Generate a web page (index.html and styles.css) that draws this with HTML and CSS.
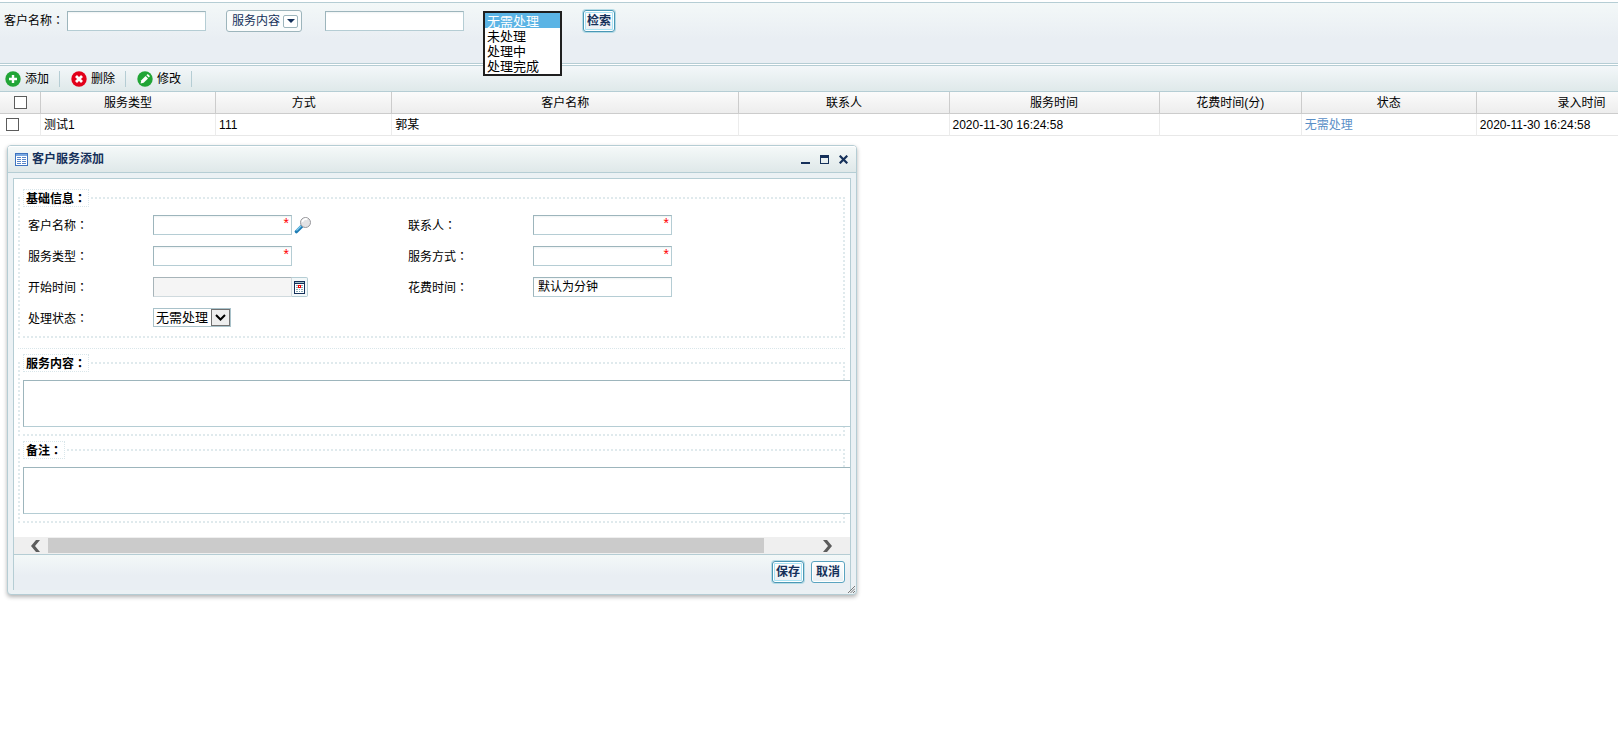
FILE: index.html
```html
<!DOCTYPE html>
<html lang="zh-CN">
<head>
<meta charset="utf-8">
<title>客户服务</title>
<link rel="stylesheet" href="styles.css">
</head>
<body>
<form class="search-bar">
  <div class="search-field">
    <label for="q-name">客户名称<span class="colon" lang="zh-TW">：</span></label>
    <input class="text-box" id="q-name" type="text">
  </div>
  <button class="menu-button" type="button">服务内容
    <span class="menu-arrow"><svg width="8" height="4" viewBox="0 0 8 4"><path d="M0 0h8L4 4z" fill="#15305a"/></svg></span>
  </button>
  <input class="text-box" type="text" aria-label="服务内容">
  <div class="list-anchor">
    <select class="status-list" size="4" aria-label="状态">
      <option selected>无需处理</option>
      <option>未处理</option>
      <option>处理中</option>
      <option>处理完成</option>
    </select>
  </div>
  <button class="button button-primary" type="button">检索</button>
</form>

<div class="toolbar">
  <button class="tool" type="button">
    <svg width="16" height="16" viewBox="0 0 16 16"><circle cx="8" cy="8" r="7.7" fill="#21a536"/><path d="M8 4v8M4 8h8" stroke="#fff" stroke-width="2.4"/></svg>添加</button>
  <button class="tool" type="button">
    <svg width="16" height="16" viewBox="0 0 16 16"><circle cx="8" cy="8" r="7.7" fill="#e2001a"/><path d="M5 5l6 6M11 5l-6 6" stroke="#fff" stroke-width="2.8"/></svg>删除</button>
  <button class="tool" type="button">
    <svg width="16" height="16" viewBox="0 0 16 16"><circle cx="8" cy="8" r="7.7" fill="#21a536"/><path d="M3.6 12.4l.7-3.1 4.3-4.3 2.4 2.4-4.3 4.3z" fill="#fff"/><path d="M9.4 4.2l.9-.9q.5-.3 1 .1l1.3 1.3q.4.5 0 1l-.8.9z" fill="#fff"/></svg>修改</button>
</div>

<div class="grid-view">
  <table class="records">
    <colgroup>
      <col class="c-check"><col class="c-mid"><col class="c-way"><col class="c-name"><col class="c-wide"><col class="c-wide"><col class="c-cost"><col class="c-mid"><col class="c-wide">
    </colgroup>
    <thead>
      <tr>
        <th><input class="tick" type="checkbox" aria-label="全选"></th>
        <th>服务类型</th><th>方式</th><th>客户名称</th><th>联系人</th><th>服务时间</th><th>花费时间(分)</th><th>状态</th><th>录入时间</th>
      </tr>
    </thead>
    <tbody>
      <tr>
        <td><input class="tick" type="checkbox" aria-label="选择测试1"></td>
        <td>测试1</td><td>111</td><td>郭某</td><td></td><td>2020-11-30 16:24:58</td><td></td><td><a href="#">无需处理</a></td><td>2020-11-30 16:24:58</td>
      </tr>
    </tbody>
  </table>
</div>

<section class="window" role="dialog" aria-labelledby="win-title">
  <header class="window-head">
    <svg width="13" height="13" viewBox="0 0 13 13" shape-rendering="crispEdges"><rect x=".5" y=".5" width="12" height="12" fill="#fff" stroke="#3f74c0"/><path d="M1 1h11v2H1z" fill="#7ba8e0"/><path d="M2 4.5h4M7 4.5h4M2 6.5h4M7 6.5h4M2 8.5h4M7 8.5h4M2 10.5h4M7 10.5h4" stroke="#5a86c8"/></svg>
    <h1 id="win-title">客户服务添加</h1>
    <button type="button" aria-label="最小化"><svg width="9" height="9" viewBox="0 0 9 9"><path d="M0 7h9v2H0z" fill="#15305a"/></svg></button>
    <button type="button" aria-label="最大化"><svg width="9" height="9" viewBox="0 0 9 9"><path d="M0 0h9v9H0zM1 3v5h7V3z" fill="#15305a" fill-rule="evenodd"/></svg></button>
    <button type="button" aria-label="关闭"><svg width="9" height="9" viewBox="0 0 9 9"><path d="M.7.7l7.6 7.6M8.3.7L.7 8.3" stroke="#15305a" stroke-width="2.2"/></svg></button>
  </header>
  <form class="window-body">
    <div class="pane">
      <fieldset>
        <legend>基础信息<span class="colon" lang="zh-TW">：</span></legend>
        <div class="form-grid">
          <label for="f-name">客户名称<span class="colon" lang="zh-TW">：</span></label>
          <div class="field">
            <span class="required"><input class="text-box" id="f-name" type="text" required></span>
            <button class="lookup" type="button" aria-label="查找客户"><svg width="18" height="18" viewBox="0 0 18 18"><path d="M2.4 15.6L8 10" stroke="#1e7cb4" stroke-width="3.4" stroke-linecap="round"/><path d="M2.4 14.6l4.800-4.800" stroke="#7fcdf0" stroke-width="1.4"/><circle cx="11.500" cy="6.500" r="5" fill="#e2e2e4" stroke="#98989c"/><path d="M8.3 6a3.500 3.500 0 0 1 5-2.600" stroke="#fff" stroke-width="1.8" fill="none"/></svg></button>
          </div>
          <label for="f-contact">联系人<span class="colon" lang="zh-TW">：</span></label>
          <div class="field"><span class="required"><input class="text-box" id="f-contact" type="text" required></span></div>

          <label for="f-type">服务类型<span class="colon" lang="zh-TW">：</span></label>
          <div class="field"><span class="required"><input class="text-box" id="f-type" type="text" required></span></div>
          <label for="f-way">服务方式<span class="colon" lang="zh-TW">：</span></label>
          <div class="field"><span class="required"><input class="text-box" id="f-way" type="text" required></span></div>

          <label for="f-start">开始时间<span class="colon" lang="zh-TW">：</span></label>
          <div class="field">
            <input class="text-box" id="f-start" type="text" readonly>
            <button class="calendar" type="button" aria-label="选择日期"><svg width="11" height="13" viewBox="0 0 11 13" shape-rendering="crispEdges"><path d="M0 0h11v13H0z" fill="#15305a"/><path d="M1 1h9v1H1z" fill="#9dbfc6"/><path d="M1 3h9v9H1z" fill="#fff"/><path d="M2 4h2v1H2zM7 4h2v1H7zM2 6h2v1H2zM7 6h2v1H7zM2 8h2v1H2zM5 8h1v1H5zM7 8h2v1H7zM2 10h2v1H2zM5 10h1v1H5zM7 10h2v1H7z" fill="#86aab4"/><path d="M4 4h3v3H4z" fill="#f00"/><path d="M5 5h1v1H5z" fill="#fff"/></svg></button>
          </div>
          <label for="f-cost">花费时间<span class="colon" lang="zh-TW">：</span></label>
          <div class="field"><input class="text-box" id="f-cost" type="text" value="默认为分钟"></div>

          <label for="f-status">处理状态<span class="colon" lang="zh-TW">：</span></label>
          <div class="field">
            <span class="drop-down">
              <select id="f-status"><option>无需处理</option><option>未处理</option><option>处理中</option><option>处理完成</option></select>
              <span class="drop-arrow"><svg width="11" height="7" viewBox="0 0 11 7"><path d="M1 1l4.500 4.500L10 1" fill="none" stroke="#000" stroke-width="2"/></svg></span>
            </span>
          </div>
        </div>
      </fieldset>
      <hr>
      <fieldset>
        <legend>服务内容<span class="colon" lang="zh-TW">：</span></legend>
        <textarea aria-label="服务内容"></textarea>
      </fieldset>
      <fieldset>
        <legend>备注<span class="colon" lang="zh-TW">：</span></legend>
        <textarea aria-label="备注"></textarea>
      </fieldset>
    </div>
    <div class="scroll-track">
      <button type="button" aria-label="向左滚动"><svg width="10" height="12" viewBox="0 0 10 12"><path d="M6 0h4L5 6l5 6H6L1 6z" fill="#5c5c5c"/></svg></button>
      <div class="scroll-thumb"></div>
      <button type="button" aria-label="向右滚动"><svg width="10" height="12" viewBox="0 0 10 12"><path d="M4 0H0l5 6-5 6h4l5-6z" fill="#5c5c5c"/></svg></button>
    </div>
    <footer class="actions">
      <button class="button button-primary" type="button">保存</button>
      <button class="button" type="button">取消</button>
    </footer>
  </form>
  <svg class="resize-grip" width="7" height="7" viewBox="0 0 7 7"><path d="M0 7l7-7M2.500 7L7 2.500M5 7l2-2" stroke="#777" fill="none"/></svg>
</section>
</body>
</html>
```

FILE: styles.css
```css
* {
  box-sizing: border-box;
}

body {
  margin: 0;
  overflow-x: hidden;
  background: #fff;
  color: #000;
  font: 12px/20px "Liberation Sans", "Noto Sans CJK SC", sans-serif;
}

button,
input,
select,
textarea {
  margin: 0;
  font: inherit;
  color: inherit;
}

button {
  padding: 0;
  border: 0;
  background: none;
}

svg {
  display: block;
  flex: none;
}

.colon {
  font-family: "Noto Sans CJK TC", sans-serif;
  line-height: 12px;
}

.text-box {
  display: block;
  width: 139px;
  height: 20px;
  padding: 0 4px;
  border: 1px solid #b5cdd4;
  border-top-color: #9db5bc;
  border-left-color: #9db5bc;
  border-radius: 0;
  background: #fff linear-gradient(#eef2f3, #fff 2px);
  outline: 0;
}

.text-box:read-only {
  background: #f5f5f5;
  border-color: #a7b4b9 #d0dade #d0dade #a7b4b9;
}

/* Search bar */
.search-bar {
  display: flex;
  align-items: flex-start;
  height: 62px;
  margin-top: 2px;
  padding: 7px 4px;
  border-top: 1px solid #b5cdd4;
  border-bottom: 1px solid #b5cdd4;
  background: linear-gradient(#f3f8f8, #e9eef3 60%);
}

.search-field {
  display: flex;
  gap: 3px;
}

.search-field label {
  line-height: 22px;
}

.search-bar .text-box {
  margin-top: 1px;
}

.menu-button {
  display: flex;
  align-items: center;
  gap: 3px;
  height: 22px;
  margin: 0 23px 0 20px;
  padding: 0 3px 0 5px;
  border: 1px solid #9db5bc;
  border-radius: 3px;
  background: #fafcfc;
  color: #15305a;
  line-height: 18px;
}

.menu-arrow {
  display: grid;
  place-items: center;
  width: 15px;
  height: 13px;
  border: 1px solid #9db5bc;
  border-radius: 2px;
  background: #fff;
}

.list-anchor {
  position: relative;
  width: 79px;
  margin: 1px 21px 0 19px;
}

.status-list {
  position: absolute;
  top: 0;
  left: 0;
  z-index: 2;
  width: 79px;
  height: 65px;
  padding: 0;
  overflow: hidden;
  border: 2px solid #1f1f1f;
  border-radius: 0;
  background: #fff;
  font-size: 13px;
}

.status-list option {
  display: flex;
  align-items: center;
  height: 15px;
  min-height: 15px;
  padding: 0 2px;
}

.status-list option:checked {
  background: #5bb4e5 linear-gradient(#5bb4e5, #5bb4e5);
  color: #fff;
}

.button {
  height: 22px;
  padding: 0 4px;
  border: 1px solid #5aa3c0;
  border-radius: 3px;
  background: linear-gradient(#fff, #e9eff4);
  box-shadow: inset 0 0 0 1px #fff;
  color: #15305a;
  font-weight: bold;
}

.button-primary {
  padding: 0 3px;
  border-color: #4a97b5;
  box-shadow: 0 0 0 1px #b5dbe6, inset 0 0 0 1px #fff, inset 0 0 0 2px #a9e2f3;
}

/* Toolbar */
.toolbar {
  display: flex;
  align-items: center;
  height: 27px;
  margin-top: 1px;
  padding-left: 5px;
  border-top: 1px solid #b5cdd4;
  border-bottom: 1px solid #b5cdd4;
  background: linear-gradient(#f3f7f9, #dfe9ea);
}

.tool {
  display: flex;
  align-items: center;
  gap: 4px;
  height: 16px;
  margin-right: 11px;
  padding-right: 10px;
  border-right: 1px solid #b5cdd4;
}

/* Records */
.grid-view {
  overflow: hidden;
}

.records {
  width: 1687px;
  table-layout: fixed;
  border-collapse: separate;
  border-spacing: 0;
}

.c-check { width: 41px; }
.c-mid { width: 175px; }
.c-way { width: 176px; }
.c-name { width: 347px; }
.c-wide { width: 210px; }
.c-cost { width: 142px; }

.records th,
.records td {
  height: 22px;
  padding: 0 3px;
  border-right: 1px solid #ececec;
  border-bottom: 1px solid #e8e8e8;
  line-height: 18px;
  white-space: nowrap;
}

.records th {
  border-color: #ccc;
  background: linear-gradient(#fbfbfb, #ededed);
  font-weight: normal;
  text-align: center;
}

.records td:first-child {
  padding-left: 6px;
}

.tick {
  display: block;
  width: 13px;
  height: 13px;
  border: 1px solid #5c5c5c;
  background: #fff;
  appearance: none;
}

.tick:checked {
  background: #5bb4e5;
}

th .tick {
  margin: 0 auto;
}

.records a {
  color: #5a8fc7;
  text-decoration: none;
}

/* Window */
.window {
  position: absolute;
  top: 145px;
  left: 7px;
  width: 850px;
  padding: 0 5px 4px;
  border: 1px solid #b5cdd4;
  border-radius: 4px;
  background: #ebf1f4;
  box-shadow: 0 2px 4px rgba(0, 0, 0, 0.3);
}

.window-head {
  display: flex;
  align-items: center;
  gap: 10px;
  height: 27px;
  margin: 0 -5px 5px;
  padding: 0 8px 0 7px;
  border-bottom: 1px solid #b5cdd4;
  border-radius: 3px 3px 0 0;
  background: linear-gradient(#f5f9f9, #dfe8e9);
  box-shadow: inset 0 1px #fff;
}

.window-head h1 {
  flex: 1;
  margin: 0 0 0 -6px;
  color: #15305a;
  font-size: 12px;
  line-height: 22px;
}

.window-body {
  border: 1px solid #b5cdd4;
  border-bottom: 0;
  background: #fff;
}

.pane {
  display: flex;
  flex-direction: column;
  overflow: hidden;
  padding: 10px 5px 14px 4px;
}

fieldset {
  min-width: 0;
  margin: 0;
  padding: 8px 3px 7px;
  border: 2px dotted #e0eaed;
}

fieldset + fieldset {
  margin-top: 5px;
}

legend {
  height: 18px;
  padding: 0 2px;
  border: 1px dotted #d9e6ea;
  font-weight: bold;
  line-height: 18px;
}

hr {
  width: 100%;
  margin: 10px 0 5px;
  border: 0;
  border-top: 1px dotted #d9e6ea;
}

.form-grid {
  display: grid;
  grid-template-columns: 125px 255px 125px 1fr;
  grid-auto-rows: 20px;
  row-gap: 11px;
  padding: 0 0 1px 5px;
}

.form-grid label {
  line-height: 22px;
}

.field {
  display: flex;
}

.required {
  position: relative;
}

.required::after {
  content: "*";
  position: absolute;
  top: 1px;
  right: 3px;
  color: #f00;
  font-size: 14px;
  line-height: 14px;
}

.lookup {
  margin-left: 2px;
}

.calendar {
  display: grid;
  place-items: center;
  width: 16px;
  height: 20px;
  border: 1px solid #b5cdd4;
  border-left: 0;
  border-radius: 0 2px 2px 0;
  background: #f3f8f9;
}

.drop-down {
  position: relative;
  display: block;
  width: 78px;
  height: 19px;
}

.drop-down select {
  display: block;
  width: 100%;
  height: 100%;
  padding: 0 2px;
  border: 1px solid #a9c2ca;
  border-radius: 0;
  background: #fff;
  font-size: 13px;
  line-height: 17px;
  appearance: none;
}

.drop-arrow {
  position: absolute;
  top: 1px;
  right: 1px;
  display: grid;
  place-items: center;
  width: 19px;
  height: 17px;
  border: 1px solid #707070;
  background: #eee;
  pointer-events: none;
}

textarea {
  display: block;
  width: calc(100% + 60px);
  height: 47px;
  border: 1px solid #b5cdd4;
  border-top-color: #9db5bc;
  border-left-color: #9db5bc;
  border-radius: 0;
  outline: 0;
  resize: none;
}

.scroll-track {
  display: flex;
  align-items: center;
  gap: 8px;
  height: 17px;
  padding: 0 17px 0 16px;
  background: #efefef;
}

.scroll-thumb {
  flex: 1;
  height: 15px;
  margin-right: 51px;
  background: #cbcbcb;
}

.actions {
  display: flex;
  justify-content: flex-end;
  align-items: flex-start;
  gap: 7px;
  height: 36px;
  padding: 6px 5px;
  border-top: 1px solid #b5cdd4;
  background: linear-gradient(#f3f8f8, #e9eef3 60%);
}

.resize-grip {
  position: absolute;
  right: 1px;
  bottom: 1px;
}
```
